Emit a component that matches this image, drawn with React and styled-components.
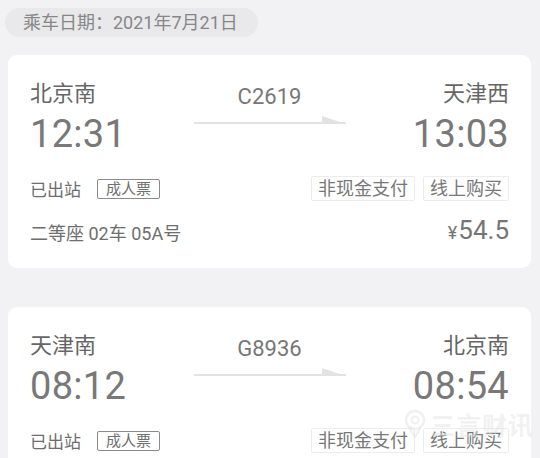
import React from "react";
import styled, { createGlobalStyle } from "styled-components";

const Global = createGlobalStyle`
  html, body { margin: 0; padding: 0; background: #f2f2f4; }
  body { font-family: Roboto, "Noto Sans CJK SC", sans-serif; overflow: hidden; }
`;

const Page = styled.div`
  width: 540px;
  height: 458px;
  padding: 8px 9px 0 8px;
  box-sizing: border-box;
  overflow: hidden;
  position: relative;
`;

const DatePill = styled.div`
  width: 253px;
  height: 29px;
  margin-left: -3px;
  border-radius: 15px;
  background: #e9e9eb;
  color: #878787;
  font-size: 18px;
  line-height: 29px;
  padding-left: 18px;
  box-sizing: border-box;
`;

const Card = styled.div`
  margin-top: ${(p) => p.$gap}px;
  background: #fff;
  border-radius: 9px;
  padding: 25px 22px 0 22px;
  height: ${(p) => p.$h}px;
  box-sizing: border-box;
`;

const TopRow = styled.div`
  display: grid;
  grid-template-columns: 1fr 152px 1fr;
  align-items: start;
`;

const Station = styled.div`
  display: flex;
  flex-direction: column;
  align-items: ${(p) => (p.$right ? "flex-end" : "flex-start")};
`;

const Name = styled.div`
  font-size: 22px;
  line-height: 28px;
  color: #666;
`;

const Time = styled.div`
  margin-top: 4px;
  font-size: 38px;
  line-height: 44px;
  color: #787878;
  letter-spacing: 0.3px;
`;

const Middle = styled.div`
  display: flex;
  flex-direction: column;
  align-items: center;
  padding-top: 4px;
`;

const TrainNo = styled.div`
  font-size: 22px;
  line-height: 26px;
  color: #777;
`;

const Arrow = styled.svg`
  display: block;
  margin-top: 5px;
`;

const InfoRow = styled.div`
  display: flex;
  align-items: center;
  justify-content: space-between;
  margin-top: ${(p) => p.$mt}px;
`;

const Group = styled.div`
  display: flex;
  align-items: center;
  gap: ${(p) => p.$gap}px;
`;

const Status = styled.span`
  font-size: 17px;
  color: #6e6e6e;
`;

const Tag = styled.span`
  font-size: 15px;
  line-height: 18px;
  padding: 0 8px;
  border-radius: 2px;
  color: #707070;
  border: 1px solid #8a8a8a;
`;

const WideTag = styled.span`
  font-size: 18px;
  line-height: 23px;
  padding: 0 6px;
  border-radius: 2px;
  color: #787878;
  border: 1px solid #ececec;
`;

const Seat = styled.span`
  font-size: 18px;
  color: #6e6e6e;
`;

const Price = styled.span`
  font-size: 26px;
  line-height: 30px;
  color: #757575;
`;

const Yen = styled.span`
  font-size: 18px;
  margin-right: 1px;
`;

const Watermark = styled.div`
  position: absolute;
  left: 404px;
  top: 406px;
  display: flex;
  align-items: center;
  gap: 4px;
  white-space: nowrap;
  font-size: 25px;
  color: rgba(225, 225, 225, 0.45);
  font-weight: 700;
  letter-spacing: 1px;
  pointer-events: none;
`;

const ArrowIcon = () => (
  <Arrow width="152" height="10" viewBox="0 0 152 10">
    <rect x="0" y="7" width="152" height="2" fill="#e2e2e2" />
    <polygon points="128,1 152,9 128,9" fill="#e2e2e2" />
  </Arrow>
);

const WatermarkLogo = () => (
  <svg width="22" height="30" viewBox="0 0 22 30">
    <circle cx="11" cy="11" r="9" fill="none" stroke="rgba(225,225,225,0.5)" strokeWidth="2.5" />
    <circle cx="11" cy="11" r="3.5" fill="none" stroke="rgba(225,225,225,0.5)" strokeWidth="2" />
    <path d="M5 18 L11 28 L17 18" fill="none" stroke="rgba(225,225,225,0.5)" strokeWidth="2" />
  </svg>
);

const Ticket = ({ from, to, dep, arr, no, gap, h, seat, price }) => (
  <Card $gap={gap} $h={h}>
    <TopRow>
      <Station>
        <Name>{from}</Name>
        <Time>{dep}</Time>
      </Station>
      <Middle>
        <TrainNo>{no}</TrainNo>
        <ArrowIcon />
      </Middle>
      <Station $right>
        <Name>{to}</Name>
        <Time>{arr}</Time>
      </Station>
    </TopRow>
    <InfoRow $mt={20}>
      <Group $gap={16}>
        <Status>已出站</Status>
        <Tag>成人票</Tag>
      </Group>
      <Group $gap={8}>
        <WideTag>非现金支付</WideTag>
        <WideTag>线上购买</WideTag>
      </Group>
    </InfoRow>
    {seat && (
      <InfoRow $mt={14}>
        <Seat>{seat}</Seat>
        <Price>
          <Yen>¥</Yen>
          {price}
        </Price>
      </InfoRow>
    )}
  </Card>
);

export default function App() {
  return (
    <>
      <Global />
      <Page>
        <DatePill>乘车日期：2021年7月21日</DatePill>
        <Ticket
          gap={18}
          h={213}
          from="北京南"
          to="天津西"
          dep="12:31"
          arr="13:03"
          no="C2619"
          seat="二等座 02车 05A号"
          price="54.5"
        />
        <Ticket
          gap={39}
          h={200}
          from="天津南"
          to="北京南"
          dep="08:12"
          arr="08:54"
          no="G8936"
        />
        <Watermark>
          <WatermarkLogo />
          三言财讯
        </Watermark>
      </Page>
    </>
  );
}
